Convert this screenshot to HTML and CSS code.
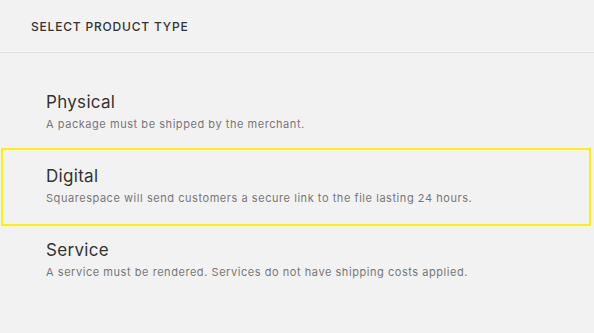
FILE: index.html
```html
<!DOCTYPE html>
<html lang="en">
<head>
<meta charset="utf-8">
<title>Select Product Type</title>
<link rel="stylesheet" href="styles.css">
</head>
<body>
  <header class="header">
    <h1 class="header-title">SELECT PRODUCT TYPE</h1>
  </header>
  <ul class="types">
    <li class="type">
      <div class="type-name">Physical</div>
      <div class="type-desc">A package must be shipped by the merchant.</div>
    </li>
    <li class="type is-selected">
      <div class="type-name">Digital</div>
      <div class="type-desc">Squarespace will send customers a secure link to the file lasting 24 hours.</div>
    </li>
    <li class="type">
      <div class="type-name">Service</div>
      <div class="type-desc">A service must be rendered. Services do not have shipping costs applied.</div>
    </li>
  </ul>
</body>
</html>
```
FILE: styles.css
```css
html, body {
  margin: 0;
  padding: 0;
  background: #f2f2f2;
  font-family: Inter, "Liberation Sans", sans-serif;
  color: #333;
}
.header {
  height: 53px;
  border-bottom: 1px solid #e0e0e0;
  display: flex;
  align-items: center;
  padding-left: 31px;
  box-sizing: border-box;
}
.header-title {
  margin: 0;
  font-size: 12px;
  font-weight: 500;
  letter-spacing: 0.8px;
  color: #333;
}
.types {
  list-style: none;
  margin: 0;
  padding: 23px 0 0 0;
}
.type {
  height: 74px;
  box-sizing: border-box;
  margin: 0 5px 0 3px;
  padding: 16px 0 0 43px;
}
.type.is-selected {
  outline: 2px solid #fff200;
}
.type-name {
  font-size: 17px;
  line-height: 20px;
  letter-spacing: 0.3px;
  color: #333;
}
.type-desc {
  margin-top: 5px;
  font-size: 11px;
  line-height: 14px;
  letter-spacing: 0.55px;
  color: #777;
}
```
